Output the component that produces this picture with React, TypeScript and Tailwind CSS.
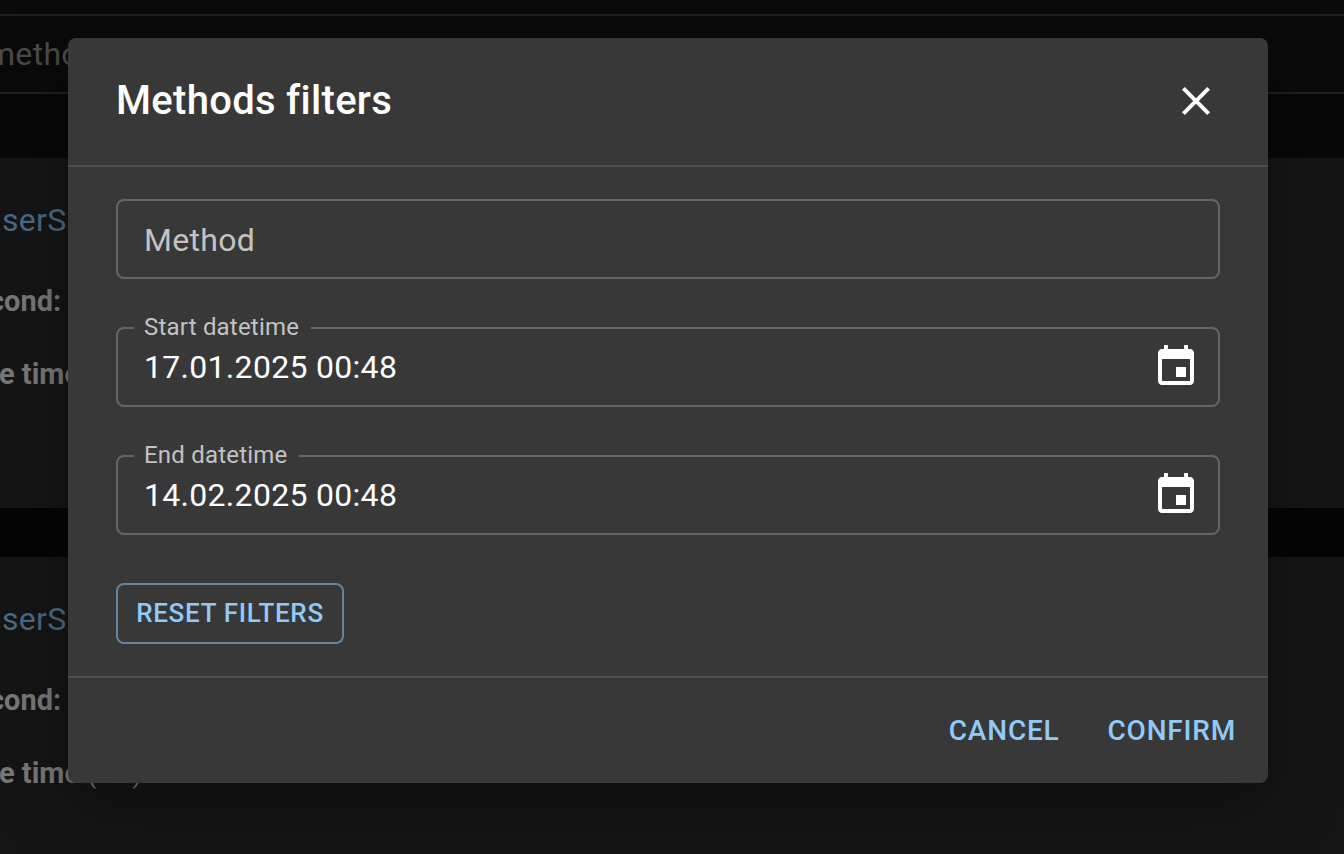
const CAL = "M17 12h-5v5h5v-5zM16 1v2H8V1H6v2H5c-1.11 0-1.99.9-1.99 2L3 19c0 1.1.89 2 2 2h14c1.1 0 2-.9 2-2V5c0-1.1-.9-2-2-2h-1V1h-2zm3 18H5V8h14v11z";

function DateField({ label, value }: { label: string; value: string }) {
  return (
    <div className="relative flex h-20 items-center justify-between rounded-lg border-2 border-[#666666] pl-[26px] pr-[18px]">
      <span className="absolute -top-[14px] left-4 bg-[#383838] pl-[10px] pr-[12px] text-2xl leading-6 tracking-[0.2px] text-[#c3c3c3]">{label}</span>
      <span className="text-[32px] leading-none tracking-[0.3px] text-white">{value}</span>
      <svg viewBox="0 0 24 24" className="h-12 w-12 fill-white"><path d={CAL} /></svg>
    </div>
  );
}

function BackgroundCard({ className }: { className: string }) {
  return (
    <div className={`overflow-hidden bg-[#151515] pt-[43px] ${className}`}>
      <div className="ml-[2px] text-[32px] leading-[38px] tracking-[0.3px] text-[#4a6a86]">serS</div>
      <div className="mt-[44px] -ml-[11px] text-[29px] font-bold leading-[36px] text-[#787878]">cond:</div>
      <div className="mt-[37px] -ml-[1px] whitespace-pre text-[29px] font-bold leading-[36px] text-[#787878]">
        e time <span className="text-[26px] font-normal">(ms)</span>
      </div>
    </div>
  );
}

export default function App() {
  return (
    <div className="relative h-[854px] w-[1344px] overflow-hidden bg-[#050505] font-['Roboto',sans-serif]">
      <div className="h-[14px] bg-[#0a0a0a]" />
      <div className="flex h-[80px] items-center overflow-hidden border-y-2 border-[#202020] bg-[#0a0a0a]">
        <span className="-ml-[13px] text-[32px] tracking-[0.3px] text-[#4a4a4a]">method</span>
      </div>
      <div className="h-[64px] bg-[#080808]" />
      <BackgroundCard className="h-[350px]" />
      <div className="h-[49px] bg-[#050505]" />
      <BackgroundCard className="h-[297px]" />

      <div className="absolute left-[68px] top-[38px] flex h-[745px] w-[1200px] flex-col rounded-lg bg-[#383838] text-white shadow-[0_22px_70px_rgba(0,0,0,0.35)]">
        <div className="flex h-[127px] shrink-0 items-center justify-between pb-[1px] pl-12 pr-12">
          <h2 className="text-[40px] font-medium leading-none tracking-[0.3px]">Methods filters</h2>
          <svg viewBox="0 0 24 24" className="h-12 w-12 fill-white"><path d="M19 6.41 17.59 5 12 10.59 6.41 5 5 6.41 10.59 12 5 17.59 6.41 19 12 13.41 17.59 19 19 17.59 13.41 12z" /></svg>
        </div>
        <div className="flex flex-1 flex-col gap-12 border-y-2 border-[#505050] px-12 pt-8">
          <div className="flex h-20 items-center rounded-lg border-2 border-[#666666] pl-[26px] pt-[2px] text-[32px] tracking-[0.3px] text-[#c3c3c3]">Method</div>
          <DateField label="Start datetime" value="17.01.2025 00:48" />
          <DateField label="End datetime" value="14.02.2025 00:48" />
          <button className="h-[61px] w-[228px] rounded-lg border-2 border-[#66849f] text-[26px] font-medium tracking-[0.7px] text-[#90caf9]">RESET FILTERS</button>
        </div>
        <div className="flex h-[105px] shrink-0 items-center justify-end gap-[48px] pr-8 text-[28px] font-medium tracking-[0.8px] text-[#90caf9]">
          <span>CANCEL</span>
          <span>CONFIRM</span>
        </div>
      </div>
    </div>
  );
}
